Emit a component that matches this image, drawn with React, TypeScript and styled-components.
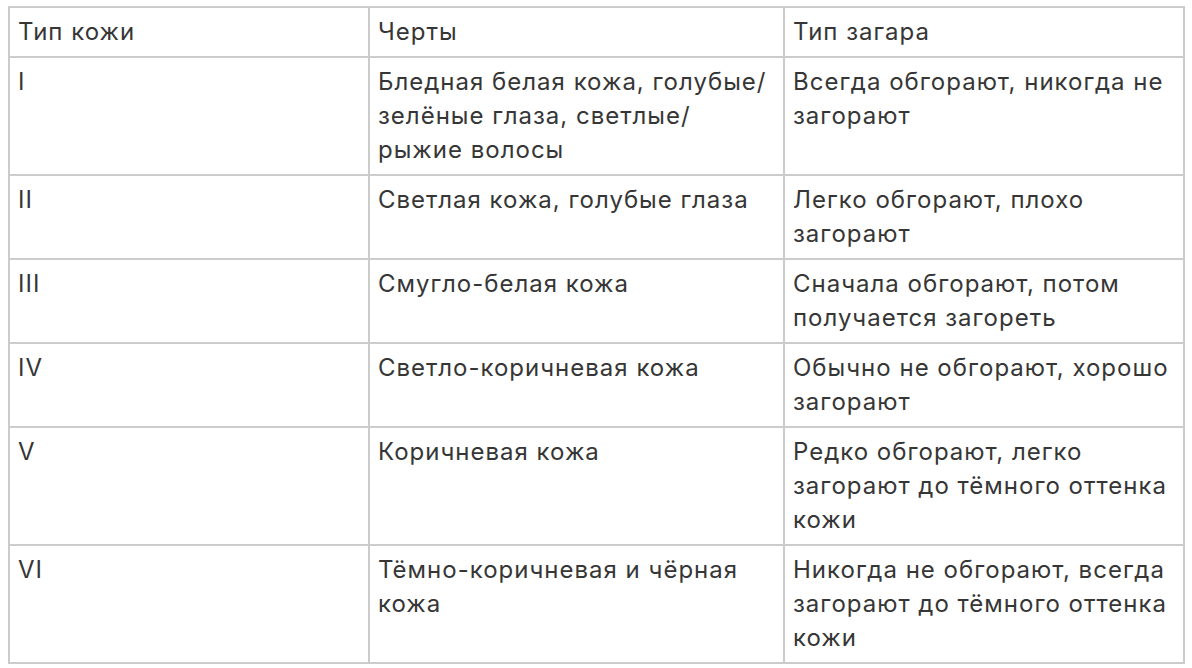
import React from "react";
import styled, { createGlobalStyle } from "styled-components";

const GlobalStyle = createGlobalStyle`
  html, body { margin: 0; padding: 0; background: #ffffff; }
  body { font-family: Inter, "Noto Sans", "Liberation Sans", sans-serif; }
`;

const Page = styled.div`
  padding: 6px 0 0 8px;
`;

const Table = styled.table`
  width: 1176px;
  border-collapse: collapse;
  table-layout: fixed;
  color: #363636;
  font-size: 24px;
  line-height: 34px;
  letter-spacing: 1px;
`;

const Cell = styled.td`
  border: 2px solid #cccccc;
  padding: 7px 8px 7px 8px;
  vertical-align: top;
  text-align: left;
  font-weight: 400;
`;

const HeadCell = styled(Cell).attrs({ as: "th" })``;

const rows: [string, string, string][] = [
  ["I", "Бледная белая кожа, голубые/ зелёные глаза, светлые/ рыжие волосы", "Всегда обгорают, никогда не загорают"],
  ["II", "Светлая кожа, голубые глаза", "Легко обгорают, плохо загорают"],
  ["III", "Смугло-белая кожа", "Сначала обгорают, потом получается загореть"],
  ["IV", "Светло-коричневая кожа", "Обычно не обгорают, хорошо загорают"],
  ["V", "Коричневая кожа", "Редко обгорают, легко загорают до тёмного оттенка кожи"],
  ["VI", "Тёмно-коричневая и чёрная кожа", "Никогда не обгорают, всегда загорают до тёмного оттенка кожи"],
];

export default function App() {
  return (
    <Page>
      <GlobalStyle />
      <Table>
        <colgroup>
          <col style={{ width: 360 }} />
          <col style={{ width: 415 }} />
          <col style={{ width: 400 }} />
        </colgroup>
        <thead>
          <tr>
            <HeadCell>Тип кожи</HeadCell>
            <HeadCell>Черты</HeadCell>
            <HeadCell>Тип загара</HeadCell>
          </tr>
        </thead>
        <tbody>
          {rows.map((r) => (
            <tr key={r[0]}>
              <Cell>{r[0]}</Cell>
              <Cell>{r[1]}</Cell>
              <Cell>{r[2]}</Cell>
            </tr>
          ))}
        </tbody>
      </Table>
    </Page>
  );
}
